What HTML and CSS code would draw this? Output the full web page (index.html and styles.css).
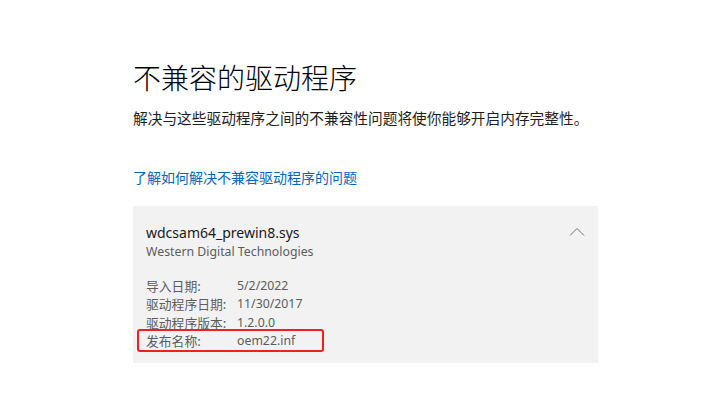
FILE: index.html
```html
<!DOCTYPE html>
<html lang="zh-CN">
<head>
<meta charset="utf-8">
<link rel="stylesheet" href="styles.css">
</head>
<body>
<div class="page">
  <h1 class="title">不兼容的驱动程序</h1>
  <p class="desc">解决与这些驱动程序之间的不兼容性问题将使你能够开启内存完整性。</p>
  <a class="link" href="#">了解如何解决不兼容驱动程序的问题</a>
  <div class="card">
    <div class="card-head">
      <div>
        <div class="file">wdcsam64_prewin8.sys</div>
        <div class="vendor">Western Digital Technologies</div>
      </div>
      <svg class="chev" width="16" height="10" viewBox="0 0 16 10"><path d="M1 8.5 L8 1.5 L15 8.5" fill="none" stroke="#707070" stroke-width="1"/></svg>
    </div>
    <div class="rows">
      <div class="row"><span class="k">导入日期:</span><span class="v">5/2/2022</span></div>
      <div class="row"><span class="k">驱动程序日期:</span><span class="v">11/30/2017</span></div>
      <div class="row"><span class="k">驱动程序版本:</span><span class="v">1.2.0.0</span></div>
      <div class="row mark"><span class="k">发布名称:</span><span class="v">oem22.inf</span></div>
    </div>
  </div>
</div>
</body>
</html>
```
FILE: styles.css
```css
html, body { margin: 0; padding: 0; background: #fff; }
body { font-family: "Noto Sans", "Noto Sans CJK SC", sans-serif; color: #1a1a1a; }
.page { padding: 59px 0 0 133px; width: 465px; display: flex; flex-direction: column; }
.title { margin: 0; font-family: "Noto Sans CJK SC", sans-serif; font-weight: 300; font-size: 28px; line-height: 36px; color: #000; }
.desc { margin: 12px 0 0; font-family: "Noto Sans CJK SC", sans-serif; font-size: 14.7px; line-height: 22px; color: #1e1e1e; white-space: nowrap; }
.link { margin-top: 38px; font-family: "Noto Sans CJK SC", sans-serif; font-size: 14px; line-height: 20px; color: #0067c0; text-decoration: none; }
.card { margin-top: 19px; background: #f2f2f2; padding: 17px 13px 13px 13px; display: flex; flex-direction: column; }
.card-head { display: flex; justify-content: space-between; align-items: flex-start; }
.chev { margin: 4px 0 0 0; }
.file { font-size: 14px; line-height: 20px; color: #1a1a1a; }
.vendor { font-size: 12.3px; line-height: 18px; color: #5c5c5c; }
.rows { margin-top: 16px; display: flex; flex-direction: column; }
.row { display: flex; font-size: 12.3px; line-height: 18.3px; color: #5c5c5c; position: relative; }
.row .k { width: 91px; font-family: "Noto Sans CJK SC", sans-serif; font-size: 12.8px; }
.row .v { color: #5c5c5c; }
.mark::after { content: ""; position: absolute; left: -9px; top: -3px; width: 183px; height: 19px; border: 2px solid #f0201c; border-radius: 3px; }
```
